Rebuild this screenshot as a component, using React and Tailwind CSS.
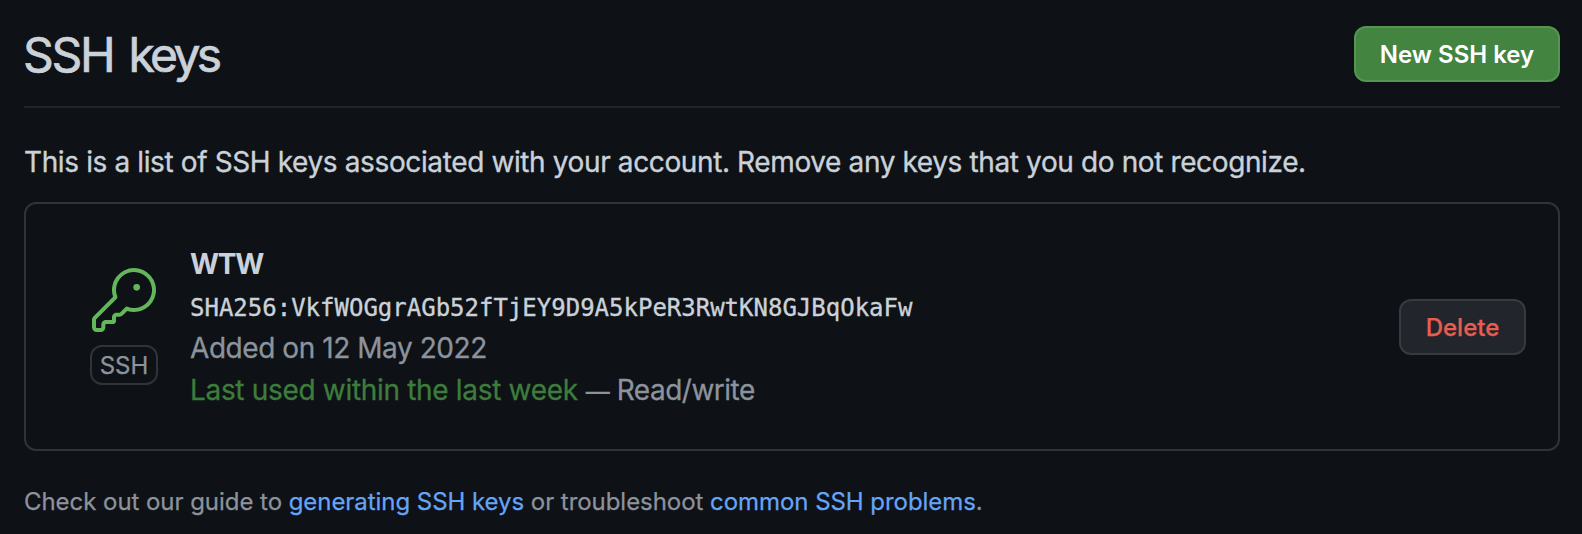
function KeyIcon() {
  return (
    <svg className="block size-16 fill-[#63b75b]" viewBox="0 0 24 24" aria-hidden="true">
      <path d="M16.75 8.5a1.25 1.25 0 1 0 0-2.5 1.25 1.25 0 0 0 0 2.5Z" />
      <path d="M15.75 0a8.25 8.25 0 1 1-2.541 16.101l-1.636 1.636a1.744 1.744 0 0 1-1.237.513H9.25a.25.25 0 0 0-.25.25v1.448a.876.876 0 0 1-.256.619l-.214.213a.75.75 0 0 1-.545.22H5.25a.25.25 0 0 0-.25.25v1A1.75 1.75 0 0 1 3.25 24h-1.5A1.75 1.75 0 0 1 0 22.25v-2.836c0-.464.185-.908.513-1.236l7.386-7.388A8.249 8.249 0 0 1 15.75 0ZM9 8.25a6.733 6.733 0 0 0 .463 2.462.75.75 0 0 1-.168.804l-7.722 7.721a.25.25 0 0 0-.073.177v2.836c0 .138.112.25.25.25h1.5a.25.25 0 0 0 .25-.25v-1c0-.966.784-1.75 1.75-1.75H7.5v-1c0-.966.784-1.75 1.75-1.75h1.086a.25.25 0 0 0 .177-.073l1.971-1.972a.75.75 0 0 1 .804-.168A6.75 6.75 0 1 0 9 8.25Z" />
    </svg>
  );
}

export default function App() {
  return (
    <main className="h-[534px] w-[1582px] overflow-hidden bg-[#0e1116] px-6 pr-[22px] font-['Inter',sans-serif] text-[#cad1d9]">
      <header className="flex h-[108px] items-center justify-between border-b-2 border-[#212529] pt-0.5">
        <h1 className="-ml-px pt-0.5 text-[48px] leading-[72px] [-webkit-text-stroke:0.7px]">
          <span className="tracking-[-2.3px]">SSH</span>
          <span className="ml-[15px] tracking-[-3.6px]">keys</span>
        </h1>
        <button className="flex h-14 w-[206px] items-center justify-center rounded-xl border-2 border-[#549550] bg-[#428440] pt-0.5 text-2xl font-semibold text-white">
          <span className="whitespace-nowrap">New SSH key</span>
        </button>
      </header>

      <p className="mt-[33px] text-[28px] leading-[42px] tracking-[-0.38px] whitespace-nowrap [-webkit-text-stroke:0.35px]">
        <span>This is a list of SSH keys associated with your account. Remove any keys that you do not recognize.</span>
      </p>

      <section className="mt-[19px] flex h-[249px] items-center rounded-xl border-2 border-[#303338] pr-8 pl-16">
        <div className="flex w-[68px] flex-col items-center">
          <KeyIcon />
          <span className="mt-[13px] flex h-10 w-[68px] items-center justify-center rounded-xl border-2 border-[#303338] pt-0.5 text-2xl text-[#8c939d] [-webkit-text-stroke:0.25px]">
            SSH
          </span>
        </div>
        <div className="ml-8 grow text-[28px] leading-[42px] whitespace-nowrap text-[#8c939d]">
          <div className="font-bold tracking-[-1.3px] text-[#cad1d9]"><span>WTW</span></div>
          <div className="h-[42px] pt-0.5 font-['DejaVu_Sans_Mono',monospace] text-2xl leading-[42px] text-[#cad1d9] [-webkit-text-stroke:0.35px]">
            <span>SHA256:VkfWOGgrAGb52fTjEY9D9A5kPeR3RwtKN8GJBqOkaFw</span>
          </div>
          <div className="h-[42px] tracking-[-0.44px] [-webkit-text-stroke:0.3px]"><span>Added on 12 May 2022</span></div>
          <div className="flex h-[42px] items-baseline [-webkit-text-stroke:0.3px]">
            <span className="tracking-[-0.32px] text-[#3d7d3c]">Last used within the last week</span>
            <span className="ml-2 text-[24px]">—</span>
            <span className="ml-[7px] tracking-[-0.5px]">Read/write</span>
          </div>
        </div>
        <button className="flex h-14 w-[127px] items-center justify-center rounded-xl border-2 border-[#373a41] bg-[#22252c] pt-0.5 text-2xl font-medium text-[#e75e50] [-webkit-text-stroke:0.25px]">
          Delete
        </button>
      </section>

      <p className="mt-[33px] text-2xl leading-9 tracking-[-0.05px] whitespace-nowrap text-[#8c939d] [-webkit-text-stroke:0.25px]">
        <span>Check out our guide to </span>
        <a className="text-[#66a4f8]">generating SSH keys</a>
        <span> or troubleshoot </span>
        <a className="text-[#66a4f8]">common SSH problems</a>.
      </p>
    </main>
  );
}
